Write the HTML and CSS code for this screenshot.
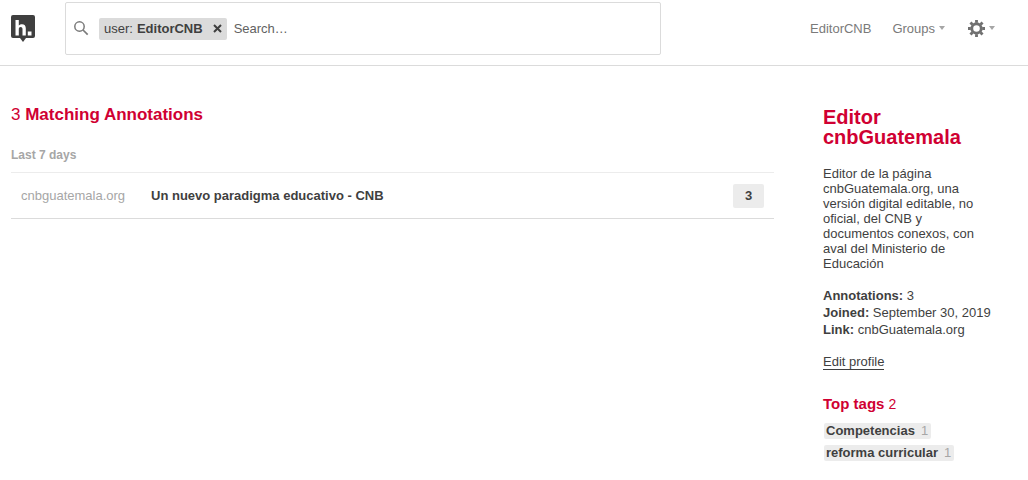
FILE: index.html
```html
<!DOCTYPE html>
<html lang="en">
<head>
<meta charset="utf-8">
<title>EditorCNB</title>
<link rel="stylesheet" href="styles.css">
</head>
<body>
<header class="topbar">
  <a class="logo" aria-label="Hypothesis">
    <svg width="24" height="27" viewBox="0 0 24 27"><path fill="#3f3f3f" d="M2 0h20a2 2 0 0 1 2 2v19a2 2 0 0 1-2 2h-7l-3 4-3-4H2a2 2 0 0 1-2-2V2a2 2 0 0 1 2-2z"/><path fill="#fff" d="M4.500 5h3.300v5.600c.9-.9 2-1.400 3.200-1.400 2.500 0 3.800 1.600 3.800 4.200V20.500h-3.300v-6.400c0-1.500-.7-2.200-1.900-2.200-1.100 0-1.800.9-1.800 2.300v6.300H4.500zM16.800 16.500h3.700v4h-3.700z"/></svg>
  </a>
  <div class="search">
    <svg class="search-icon" width="16" height="16" viewBox="0 0 16 16"><circle cx="6.500" cy="6.500" r="4.700" fill="none" stroke="#7a7a7a" stroke-width="1.500"/><path d="M10 10l4.700 4.700" stroke="#7a7a7a" stroke-width="1.700"/></svg>
    <span class="lozenge">user: <b>EditorCNB</b><svg class="lozenge-x" width="9" height="9" viewBox="0 0 9 9"><path d="M1 1l7 7M8 1l-7 7" stroke="#3f3f3f" stroke-width="2"/></svg></span>
    <span class="placeholder">Search…</span>
  </div>
  <nav class="nav">
    <a class="nav-user">EditorCNB</a>
    <a class="nav-groups">Groups<i class="caret"></i></a>
    <a class="nav-gear">
      <svg width="17" height="17" viewBox="0 0 18 18"><circle cx="9" cy="9" r="5" fill="none" stroke="#707070" stroke-width="3"/><g stroke="#707070" stroke-width="3"><path d="M9 0v3M9 15v3M0 9h3M15 9h3M2.600 2.600l2.100 2.100M13.300 13.300l2.100 2.100M15.400 2.600l-2.100 2.100M4.700 13.300l-2.100 2.100"/></g></svg>
      <i class="caret"></i>
    </a>
  </nav>
</header>
<div class="content">
  <main class="results">
    <h1 class="count">3 <b>Matching Annotations</b></h1>
    <h2 class="period">Last 7 days</h2>
    <div class="row">
      <span class="domain">cnbguatemala.org</span>
      <span class="doc-title">Un nuevo paradigma educativo - CNB</span>
      <span class="badge">3</span>
    </div>
  </main>
  <aside class="sidebar">
    <h2 class="name">Editor cnbGuatemala</h2>
    <p class="bio">Editor de la página cnbGuatemala.org, una versión digital editable, no oficial, del CNB y documentos conexos, con aval del Ministerio de Educación</p>
    <ul class="facts">
      <li><b>Annotations:</b> 3</li>
      <li><b>Joined:</b> September 30, 2019</li>
      <li><b>Link:</b> cnbGuatemala.org</li>
    </ul>
    <a class="edit">Edit profile</a>
    <h3 class="tags-title"><b>Top tags</b> <span class="tags-count">2</span></h3>
    <ul class="tags">
      <li><span class="tag"><b>Competencias</b><span class="tag-count">1</span></span></li>
      <li><span class="tag"><b>reforma curricular</b><span class="tag-count">1</span></span></li>
    </ul>
  </aside>
</div>
</body>
</html>
```
FILE: styles.css
```css
* { box-sizing: border-box; }
html, body { margin: 0; padding: 0; }
body {
  font-family: "Liberation Sans", Arial, sans-serif;
  font-size: 13px;
  color: #3f3f3f;
  background: #fff;
  height: 480px;
  overflow: hidden;
}
.topbar {
  display: flex;
  align-items: flex-start;
  height: 66px;
  padding: 2px 0 0 11px;
  border-bottom: 1px solid #dbdbdb;
}
.logo { display: block; width: 24px; margin-top: 13px; height: 27px; }
.logo svg { display: block; }
.search {
  margin-left: 30px;
  width: 596px;
  height: 53px;
  border: 1px solid #dbdbdb;
  border-radius: 2px;
  display: flex;
  align-items: center;
  padding-left: 7px;
}
.search-icon { margin-top: -1px; }
.lozenge {
  display: flex;
  align-items: center;
  margin-left: 10px;
  height: 22px;
  padding: 0 5px;
  background: #dbdbdb;
  border-radius: 2px;
  color: #3f3f3f;
  white-space: nowrap;
}
.lozenge b { margin-left: 4px; }
.lozenge-x { margin-left: 10px; }
.placeholder { margin-left: 7px; color: #626262; }
.nav {
  display: flex;
  align-items: center;
  margin-left: 149px;
  height: 52px;
  color: #7a7a7a;
  white-space: nowrap;
}
.nav-groups { margin-left: 21px; display: flex; align-items: center; }
.nav-gear { margin-left: 23px; display: flex; align-items: center; }
.caret {
  display: block;
  width: 0;
  height: 0;
  margin-left: 4px;
  border-left: 3.500px solid transparent;
  border-right: 3.500px solid transparent;
  border-top: 4px solid #a6a6a6;
}
.content { display: flex; padding: 0 0 0 11px; }
.results { width: 763px; padding-top: 39px; }
.count {
  margin: 0;
  font-size: 17px;
  line-height: 20px;
  font-weight: 400;
  color: #d00032;
}
.period {
  margin: 22px 0 0;
  font-size: 12px;
  line-height: 16px;
  font-weight: 700;
  color: #a6a6a6;
}
.row {
  display: flex;
  align-items: center;
  height: 47px;
  margin-top: 9px;
  padding: 0 10px;
  border-top: 1px solid #ececec;
  border-bottom: 1px solid #dbdbdb;
}
.domain { width: 130px; color: #a6a6a6; }
.doc-title { flex: 1; font-weight: 700; }
.badge {
  width: 31px;
  height: 24px;
  background: #ececec;
  border-radius: 2px;
  text-align: center;
  line-height: 24px;
  font-weight: 700;
}
.sidebar { width: 160px; margin-left: 49px; padding-top: 41px; }
.name {
  margin: 0;
  font-size: 20px;
  line-height: 20px;
  font-weight: 700;
  color: #d00032;
}
.bio { margin: 19px 0 0; line-height: 15px; }
.facts { list-style: none; margin: 16px 0 0; padding: 0; line-height: 17px; white-space: nowrap; }
.edit {
  display: inline-block;
  margin-top: 16px;
  line-height: 15px;
  border-bottom: 1px solid #3f3f3f;
}
.tags-title {
  margin: 25px 0 0;
  font-size: 15px;
  line-height: 18px;
  font-weight: 400;
  color: #d00032;
}
.tags-count { font-size: 14px; }
.tags { list-style: none; margin: 10px 0 0; padding: 0; line-height: 16px; }
.tags li { height: 16px; margin: 0 0 6px 1px; display: flex; }
.tag { background: #ececec; border-radius: 2px; padding: 0 3px 0 2px; display: flex; }
.tag-count { color: #a6a6a6; margin-left: 6px; }
```
